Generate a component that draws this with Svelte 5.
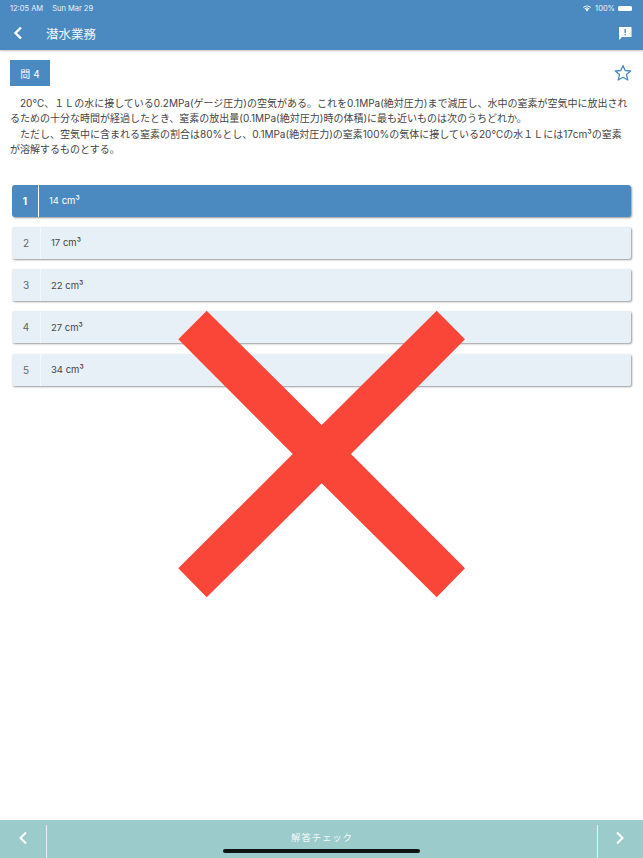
<script>
	const choices = [
		{ no: 1, value: '14', selected: true },
		{ no: 2, value: '17', selected: false },
		{ no: 3, value: '22', selected: false },
		{ no: 4, value: '27', selected: false },
		{ no: 5, value: '34', selected: false }
	]
</script>

<div class="page">
	<header class="top">
		<div class="status">
			<span class="time">12:05 AM</span>
			<span class="date">Sun Mar 29</span>
			<span class="spacer"></span>
			<svg class="wifi" width="10" height="8" viewBox="0 0 12 9">
				<path d="M6 8.600 4.200 6.700a2.600 2.600 0 0 1 3.600 0Z" fill="#fff" />
				<path d="M2.900 5.400a4.600 4.600 0 0 1 6.200 0l-.8.8a3.500 3.500 0 0 0-4.600 0Z" fill="#fff" />
				<path d="M1 3.500a7.300 7.300 0 0 1 10 0l-.8.8a6.200 6.200 0 0 0-8.400 0Z" fill="#fff" />
			</svg>
			<span class="pct">100%</span>
			<span class="battery"></span>
		</div>
		<div class="nav">
			<svg class="back" width="10" height="14" viewBox="0 0 10 14">
				<path d="M8 1.500 2.500 7 8 12.500" fill="none" stroke="#fff" stroke-width="2.400" />
			</svg>
			<span class="title">潜水業務</span>
			<svg class="report" width="14" height="14" viewBox="0 0 14 14">
				<path d="M1 1h12.500v10H4l-3 3Z" fill="#fff" />
				<rect x="6.500" y="3" width="1.400" height="4" fill="#4a8ac0" />
				<rect x="6.500" y="8" width="1.400" height="1.400" fill="#4a8ac0" />
			</svg>
		</div>
	</header>

	<main class="body">
		<div class="head-row">
			<span class="badge">問 4</span>
			<svg class="star" width="18" height="18" viewBox="0 0 18 18">
				<path d="M9 1.500 11.200 6.500 16.700 7 12.500 10.600 13.800 16 9 13.200 4.200 16 5.500 10.600 1.300 7 6.800 6.500Z" fill="none" stroke="#4a8ac0" stroke-width="1.300" stroke-linejoin="round" />
			</svg>
		</div>

		<div class="question">
			<p>20℃、１Ｌの水に接している0.2MPa(ゲージ圧力)の空気がある。これを0.1MPa(絶対圧力)まで減圧し、水中の窒素が空気中に放出されるための十分な時間が経過したとき、窒素の放出量(0.1MPa(絶対圧力)時の体積)に最も近いものは次のうちどれか。</p>
			<p>ただし、空気中に含まれる窒素の割合は80%とし、0.1MPa(絶対圧力)の窒素100%の気体に接している20℃の水１Ｌには17cm³の窒素が溶解するものとする。</p>
		</div>

		<ul class="choices">
			{#each choices as c}
				<li class="choice" class:selected={c.selected}>
					<span class="no">{c.no}</span>
					<span class="value">{c.value} cm³</span>
				</li>
			{/each}
		</ul>
	</main>

	<footer class="bottom">
		<div class="side left">
			<svg width="10" height="14" viewBox="0 0 10 14">
				<path d="M8 1.500 2.500 7 8 12.500" fill="none" stroke="#fff" stroke-width="2" />
			</svg>
		</div>
		<span class="check">解答チェック</span>
		<div class="side right">
			<svg width="10" height="14" viewBox="0 0 10 14">
				<path d="M2 1.500 7.500 7 2 12.500" fill="none" stroke="#fff" stroke-width="2" />
			</svg>
		</div>
	</footer>

	<div class="home"></div>

	<!-- wrong answer mark -->
	<svg class="cross" width="643" height="858" viewBox="0 0 643 858">
		<polygon
			points="206.700,310.700 321.700,425 436.700,310.700 465,339.300 351,454 465,568.300 436.700,597.300 321.700,483.300 206.700,597.300 178.300,568.300 292.700,454 178.300,339.300"
			fill="#f94638"
		/>
	</svg>
</div>

<style>
	:global(body) {
		margin: 0;
		background: #fff;
	}

	.page {
		position: relative;
		width: 643px;
		height: 858px;
		overflow: hidden;
		display: flex;
		flex-direction: column;
		font-family: Inter, 'Noto Sans CJK JP', sans-serif;
		color: #3c3c3c;
	}

	.top {
		background: #4a8ac0;
		height: 50px;
		color: #fff;
		box-shadow: 0 1px 2px rgba(0, 0, 0, 0.25);
		flex: none;
		position: relative;
	}

	.status {
		display: flex;
		align-items: center;
		height: 16px;
		padding: 0 10px;
		font-size: 7.500px;
		color: #eaf2f8;
	}

	.date {
		margin-left: 9px;
	}

	.spacer {
		flex: 1;
	}

	.pct {
		margin: 0 3px;
	}

	.battery {
		width: 14px;
		height: 5px;
		background: #fff;
		border-radius: 1.500px;
		margin-right: 1px;
	}

	.nav {
		display: flex;
		align-items: center;
		height: 34px;
		padding: 0 11px 0 13px;
	}

	.title {
		margin-left: 23px;
		font-size: 12.500px;
		flex: 1;
		color: #f2f6fa;
	}

	.body {
		flex: 1;
		padding: 10px 12px 0 10px;
	}

	.head-row {
		display: flex;
		justify-content: space-between;
		align-items: center;
		height: 26px;
	}

	.badge {
		width: 40px;
		height: 26px;
		background: #4a8ac0;
		color: #fff;
		font-size: 10px;
		display: flex;
		align-items: center;
		justify-content: center;
	}

	.star {
		margin: -1px -1px 0 0;
	}

	.question {
		margin-top: 10px;
		font-size: 10px;
		line-height: 15.400px;
		color: #444;
	}

	.question p {
		margin: 0;
		text-indent: 10px;
	}

	.choices {
		list-style: none;
		margin: 27px 0 0 2px;
		padding: 0;
		display: flex;
		flex-direction: column;
		gap: 10.250px;
	}

	.choice {
		display: flex;
		align-items: center;
		height: 32px;
		background: #e8f0f7;
		border-radius: 2px;
		box-shadow: 1px 1px 2px rgba(0, 0, 0, 0.4);
		font-size: 9.500px;
		color: #444;
	}

	.no {
		width: 28px;
		height: 100%;
		display: flex;
		align-items: center;
		justify-content: center;
		border-right: 1px solid #f6f9fc;
		font-size: 10px;
		color: #666;
		flex: none;
	}

	.value {
		margin-left: 10px;
	}

	.choice.selected {
		background: #4a8ac0;
		color: #fff;
		border-radius: 3px;
	}

	.choice.selected .no {
		width: 26px;
		color: #fff;
		font-weight: 700;
		border-right-color: #fff;
	}

	.bottom {
		flex: none;
		height: 38px;
		background: #9bcbcb;
		display: flex;
		align-items: flex-start;
	}

	.side {
		width: 47px;
		height: 33px;
		margin-top: 5px;
		display: flex;
		align-items: center;
		justify-content: center;
		padding-bottom: 7px;
		box-sizing: border-box;
		flex: none;
	}

	.side.left {
		border-right: 1px solid #e6f2f2;
	}

	.side.right {
		width: 46px;
		border-left: 1px solid #e6f2f2;
		padding-right: 2px;
	}

	.check {
		flex: 1;
		text-align: center;
		font-size: 9.500px;
		letter-spacing: 0.800px;
		color: #f4fafa;
		line-height: 36px;
	}

	.home {
		position: absolute;
		left: 223px;
		bottom: 5px;
		width: 197px;
		height: 4px;
		border-radius: 2px;
		background: #0c1414;
	}

	.cross {
		position: absolute;
		inset: 0;
		pointer-events: none;
	}
</style>
